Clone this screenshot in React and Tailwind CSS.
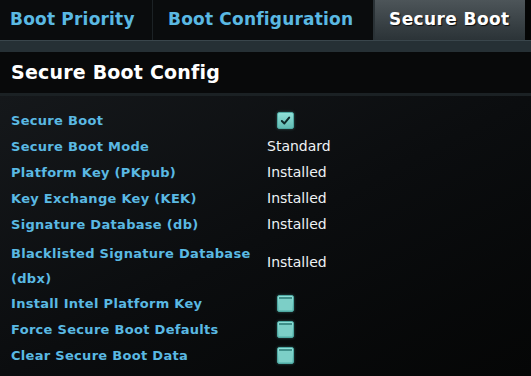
import React from 'react';

const rows = [
  { label: 'Secure Boot', type: 'check', checked: true },
  { label: 'Secure Boot Mode', value: 'Standard' },
  { label: 'Platform Key (PKpub)', value: 'Installed' },
  { label: 'Key Exchange Key (KEK)', value: 'Installed' },
  { label: 'Signature Database (db)', value: 'Installed' },
  { label: 'Blacklisted Signature Database (dbx)', value: 'Installed', tall: true },
  { label: 'Install Intel Platform Key', type: 'check' },
  { label: 'Force Secure Boot Defaults', type: 'check' },
  { label: 'Clear Secure Boot Data', type: 'check' },
];

function Checkbox({ checked }) {
  return (
    <div className="w-[17px] h-[17px] rounded-[2px] border border-[#4fa8a2] bg-gradient-to-b from-[#8fe0d8] to-[#62bcb4] shadow-[0_0_3px_rgba(120,220,210,0.35)] flex items-center justify-center">
      {checked ? (
        <svg width="11" height="11" viewBox="0 0 12 12">
          <path d="M2 6.5 L4.8 9.2 L10 2.8" fill="none" stroke="#0d2a2a" strokeWidth="2.2" strokeLinecap="round" strokeLinejoin="round" />
        </svg>
      ) : (
        <div className="w-[13px] h-[13px] border-t-2 border-[#3f8f89] bg-[#7ccfc7]" />
      )}
    </div>
  );
}

export default function App() {
  const font = { fontFamily: '"DejaVu Sans", "Liberation Sans", sans-serif' };
  return (
    <div className="w-[531px] h-[376px] overflow-hidden bg-[#07090a] flex flex-col" style={font}>
      {/* Tabs */}
      <div className="h-[40px] flex bg-[#040505]">
        <div className="w-[153px] bg-[#0a0c0d] border-r border-[#1c2225] flex items-center pl-[10px] text-[17px] font-bold text-[#5ab9e3] tracking-[0.2px]">
          Boot Priority
        </div>
        <div className="w-[222px] bg-[#0a0c0d] border-r-2 border-[#2a3236] flex items-center pl-[15px] text-[17px] font-bold text-[#5ab9e3] tracking-[0.2px]">
          Boot Configuration
        </div>
        <div className="w-[150px] bg-gradient-to-b from-[#4d5559] to-[#2b3337] flex items-center pl-[14px] text-[17px] font-bold text-white tracking-[0.4px] [text-shadow:1px_1px_1px_rgba(0,0,0,0.8)]">
          Secure Boot
        </div>
      </div>
      <div className="h-[12px] bg-[#263035] border-t border-[#3a464c]" />

      {/* Title */}
      <div className="h-[41px] bg-[#08090a] flex items-center pl-[11px] text-[19px] font-bold text-white tracking-[0.2px]">
        Secure Boot Config
      </div>
      <div className="h-[3px] bg-[#1b2124]" />

      {/* Content */}
      <div className="flex-1 bg-gradient-to-br from-[#15181b] via-[#0b0d0f] to-[#050606] pt-[11px]">
        {rows.map((r) => (
          <div key={r.label} className={`flex items-center ${r.tall ? 'h-[53px]' : 'h-[26px]'}`}>
            <div className={`w-[256px] pl-[11px] text-[13px] font-bold text-[#5ab9e3] leading-[25px] tracking-[0.3px] ${r.tall ? 'pt-[4px] pr-[4px]' : ''}`}>
              {r.label}
            </div>
            <div className={`pl-[11px] ${r.tall ? 'pb-[3px]' : ''}`}>
              {r.type === 'check' ? (
                <div className="pl-[10px]"><Checkbox checked={r.checked} /></div>
              ) : (
                <span className="text-[14px] text-[#eef2f4]">{r.value}</span>
              )}
            </div>
          </div>
        ))}
      </div>
    </div>
  );
}
